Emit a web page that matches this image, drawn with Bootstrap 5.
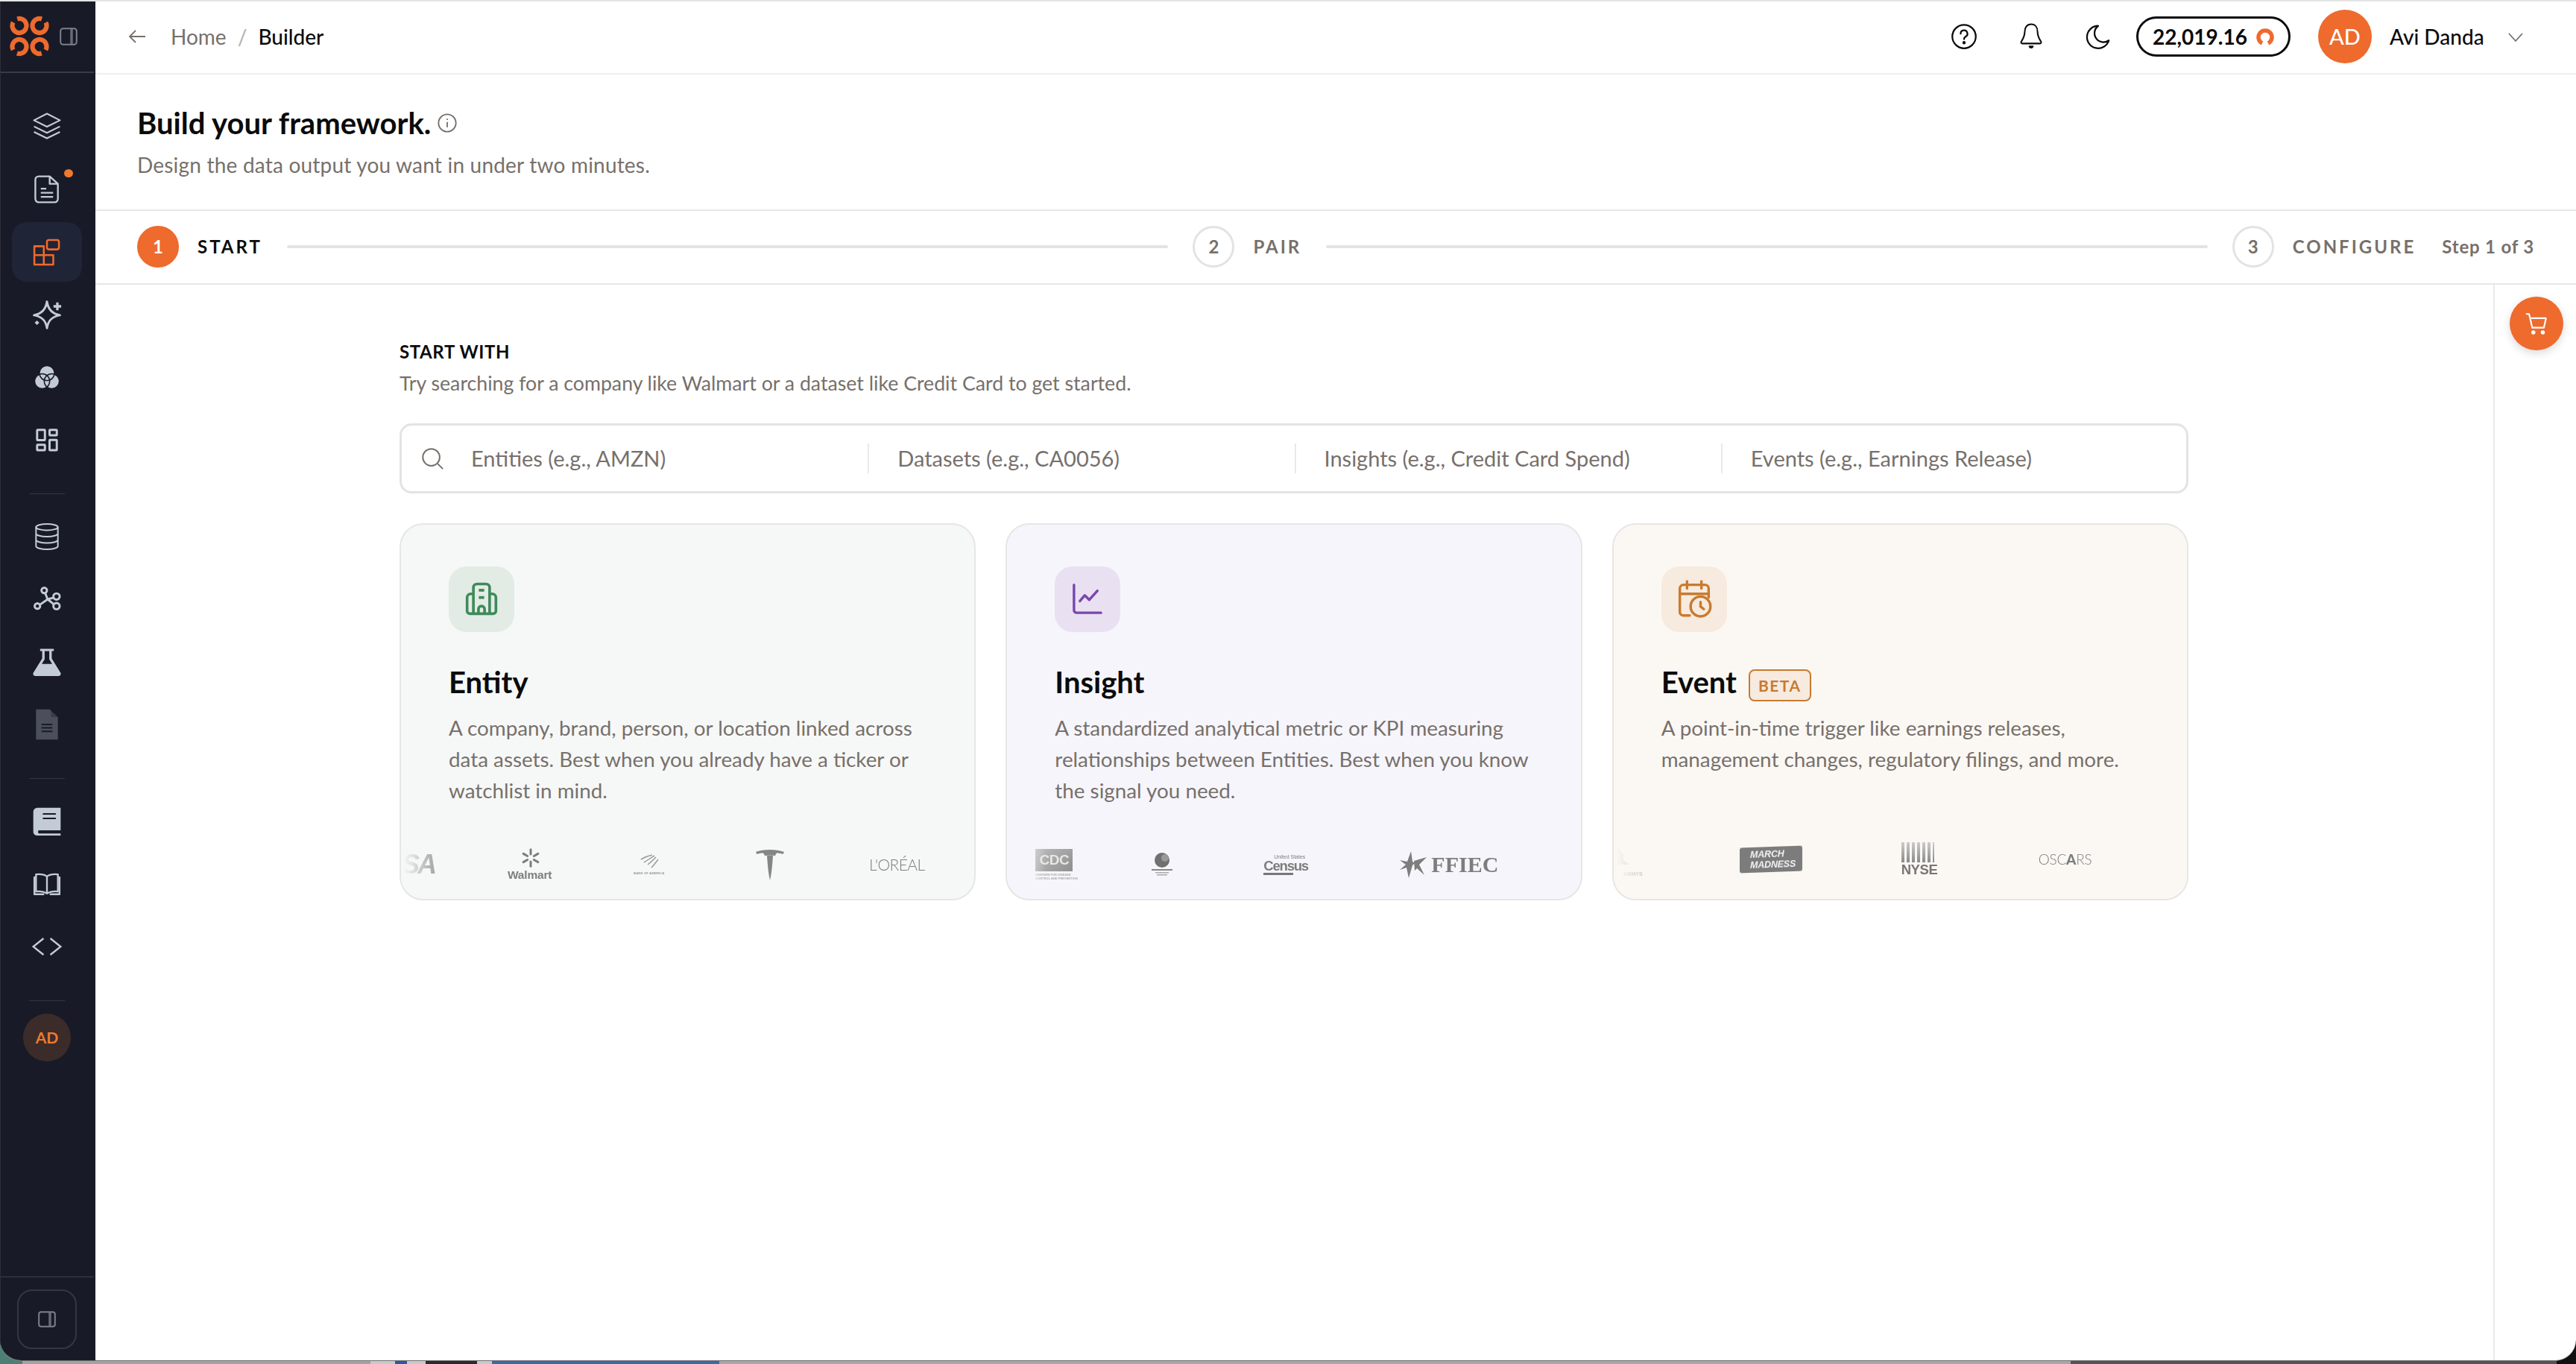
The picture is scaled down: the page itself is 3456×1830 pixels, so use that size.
<!DOCTYPE html>
<html lang="en">
<head>
    <meta charset="UTF-8">
    <meta name="viewport" content="width=device-width, initial-scale=1.0">
    <title>Builder</title>
    <link href="https://cdn.jsdelivr.net/npm/bootstrap@5.3.0/dist/css/bootstrap.min.css" rel="stylesheet">
    <style>
        html, body { height: 100%; }
        body {
            font-family: 'Lato', 'Liberation Sans', sans-serif;
            color: #0b0b0b;
            /* what shows of the desktop under the window */
            background: linear-gradient(to right, #4f7f74 0 30px, #a3a3a3 30px 497px, #c9c9c9 497px 530px, #2a5aa0 530px 546px, #c9c9c9 546px 571px, #2b2b2b 571px 640px, #c9c9c9 640px 660px, #3a6aa8 660px 965px, #a8a8a8 965px 2778px, #555 2778px 3430px, #111 3430px);
            overflow: hidden;
        }
        .app-window {
            height: 1826px;
            background: #fff;
            border-top: 2px solid #e4e4e4;
            border-bottom: 1px solid #6f6f6f;
            border-radius: 0 0 28px 28px;
            overflow: hidden;
        }
        .side-rail {
            width: 128px;
            flex: 0 0 128px;
            background: #181b27;
            padding-right: 2px;
            border-left: 1px solid #2c2f3a;
        }
        .rail-top { height: 96px; flex: none; border-bottom: 2px solid #3a3d48; padding-left: 12px; gap: 13px; }
        .rail-list { padding-top: 32px; gap: 4px; }
        .rail-item { width: 94px; height: 80px; flex: none; border-radius: 20px; color: #c3cbd6; margin-left: 15px; }
        .rail-item svg { width: 44px; height: 44px; display: block; }
        .rail-item.current { background: #1f2536; color: #ee6a2d; }
        .rail-item.dim { color: #4b4f5c; }
        .rail-dot { top: -5px; right: -13px; width: 12px; height: 11px; background: #ee7a2d; }
        .rail-sep { width: 48px; height: 1px; background: #333642; margin: 28px 0 13px 38px; flex: none; }
        .rail-avatar {
            width: 64px; height: 64px; margin-left: 30px;
            background: #3b2c2a; color: #ee7a2d;
            font-size: 21px; font-weight: 700;
        }
        .rail-foot { border-top: 2px solid #2c2f3a; padding: 16px 0 15px 22px; }
        .rail-toggle { width: 80px; height: 80px; border: 2px solid #343742; border-radius: 20px; color: #7b808c; }

        .top-bar { height: 98px; border-bottom: 2px solid #f0efee; padding: 0 69px 2px 44px; flex: none; }
        .crumbs { --bs-breadcrumb-divider: '/'; --bs-breadcrumb-margin-bottom: 0; --bs-breadcrumb-item-padding-x: 15px; --bs-breadcrumb-divider-color: #b9b5b2; font-size: 28px; margin-left: 33px; }
        .crumbs .breadcrumb-item { color: #77706b; }
        .crumbs .breadcrumb-item.active { color: #0b0b0b; font-weight: 500; }
        .top-icon { width: 36px; height: 36px; display: block; margin-right: 54px; }
        .top-icon.last { margin-right: 33px; }
        .credit-pill {
            height: 54px; width: 207px; border: 3px solid #0b0b0b;
            font-size: 28px; font-weight: 700; gap: 12px;
        }
        .user-circle { width: 72px; height: 72px; margin-left: 37px; background: #ee6a2d; color: #fff; font-size: 29px; font-weight: 500; }
        .user-name { font-size: 28px; font-weight: 500; margin-left: 24px; width: 157px; }

        .page-head { height: 183px; border-bottom: 2px solid #e8e6e4; padding: 40px 0 0 56px; flex: none; }
        .page-title { font-size: 40px; font-weight: 700; line-height: 50px; margin: 0; }
        .page-sub { font-size: 28px; letter-spacing: .2px; color: #77706b; line-height: 36px; margin: 13px 0 0; }

        .step-bar { height: 99px; border-bottom: 2px solid #e8e6e4; padding: 0 56px 2px; flex: none; }
        .step-num { width: 56px; height: 56px; flex: none; border: 3px solid #e5e3e1; color: #77706b; font-size: 24px; font-weight: 700; }
        .step-num.on { background: #ee6a2d; border-color: #ee6a2d; color: #fff; }
        .step-label { font-size: 24px; font-weight: 700; letter-spacing: 3px; color: #77706b; margin-left: 25px; }
        .step-label.on { color: #0b0b0b; }
        .step-line { height: 4px; background: #e5e3e1; border-radius: 2px; flex: 1 1 0; margin: 0 33px; }
        .step-count { font-size: 24px; font-weight: 700; color: #77706b; margin-left: 35px; letter-spacing: .8px; }

        .work-area { min-height: 0; }
        .work-main { padding: 74px 409px 0 408px; }
        .rail-right { width: 111px; flex: none; border-left: 2px solid #eceae8; padding: 16px 0 0 20px; }
        .cart-btn { width: 72px; height: 72px; background: #ee6a2d; color: #fff; box-shadow: 0 4px 12px rgba(0,0,0,.15); padding: 0; }
        .start-title { font-size: 24px; font-weight: 700; line-height: 32px; letter-spacing: .6px; margin: 0; }
        .start-sub { font-size: 26.7px; color: #77706b; line-height: 36px; margin: 8px 0 36px; }

        .search-box { height: 94px; border: 3px solid #e5e3e1; border-radius: 16px; padding-right: 52px; }
        .search-glass { width: 55px; flex: none; color: #77706b; padding-left: 24px; }
        .search-glass svg { flex: none; }
        .search-col { flex: 1 1 0; font-size: 29px; color: #77706b; }
        .search-col span { padding-left: 38px; }
        .search-col + .search-col { border-left: 2px solid #ebe9e7; height: 40px; }

        .card-row { gap: 40px; margin-top: 40px; }
        .pick-card {
            flex: 1 1 0; height: 506px; --bs-card-border-color: #e8e6e4; --bs-card-border-width: 2px;
            --bs-card-border-radius: 32px; overflow: hidden;
        }
        .pick-body { padding: 56px 64px 0; }
        .tile { width: 88px; height: 88px; border-radius: 24px; }
        .tile svg { width: 58px; height: 58px; }
        .pick-name { font-size: 40px; font-weight: 700; line-height: 52px; margin: 41px 0 15px; gap: 16px; }
        .pick-text { font-size: 27.8px; line-height: 42px; color: #77706b; margin: 0; white-space: nowrap; }
        .tag-beta {
            font-size: 21px; font-weight: 700; letter-spacing: 1.5px; line-height: 1;
            padding: 9px 11px; border: 2px solid #c97a2e; border-radius: 8px;
            background: #f7eadf; color: #c97a2e; margin-top: 8px;
        }
        .card-green { background: #f6f8f7; }
        .card-green .tile { background: #e2ece5; color: #3f8a5a; }
        .card-purple { background: #f6f5fb; }
        .card-purple .tile { background: #e9e0f1; color: #7a46ae; }
        .card-amber { background: #fbf8f4; }
        .card-amber .tile { background: #f7eadf; color: #c97a2e; }

        .logo-strip {
            height: 84px; margin-top: auto; margin-bottom: 4px; color: #858585;
            -webkit-mask-image: linear-gradient(to right, transparent 4px, #000 52px);
            mask-image: linear-gradient(to right, transparent 4px, #000 52px);
        }
        .logo-strip.lifted { margin-bottom: 11px; }
        .logo-strip > * { flex: none; }
        .logo-visa { font: italic 700 36px 'Liberation Sans', sans-serif; width: 44px; margin-left: 1px; letter-spacing: -3px; color: #999; white-space: nowrap; }
        .logo-walmart { width: 62px; margin-left: 98px; font: 700 15.500px/18px 'Liberation Sans', sans-serif; color: #7d7d7d; letter-spacing: -.2px; white-space: nowrap; }
        .logo-walmart svg { width: 28px; height: 28px; display: block; margin: 0 auto; }
        .logo-boa { width: 44px; margin-left: 107px; font: 700 4.400px/6px 'Liberation Sans', sans-serif; white-space: nowrap; color: #999; }
        .logo-boa svg { width: 28px; height: 22px; display: block; margin: 0 auto 2px; }
        .logo-tesla { width: 42px; height: 42px; margin-left: 118px; }
        .logo-loreal { font-size: 21px; font-weight: 300; margin-left: 112px; letter-spacing: -.6px; color: #7d7d7d; }
        .logo-cdc { width: 50px; margin-left: 38px; font: 700 4px/5px 'Liberation Sans', sans-serif; color: #aaa; white-space: nowrap; }
        .logo-cdc-box { height: 30px; background: linear-gradient(135deg, #bdbdbd, #8f8f8f); color: #e6e6e6; font: 700 19px/30px 'Liberation Sans', sans-serif; text-align: center; margin-bottom: 2px; letter-spacing: -.5px; }
        .logo-fred { width: 32px; height: 34px; margin-left: 104px; }
        .logo-census { width: 56px; margin-left: 120px; font: 700 18.500px/17px 'Liberation Sans', sans-serif; letter-spacing: -1.200px; color: #7d7d7d; white-space: nowrap; }
        .logo-census small { display: block; font-size: 7px; line-height: 6px; letter-spacing: 0; text-align: right; font-weight: 400; }
        .logo-census i { display: block; height: 3px; background: #777; width: 40px; margin-top: 1px; }
        .logo-ffiec { margin-left: 127px; gap: 5px; font: 700 30px 'Liberation Serif', serif; color: #7d7d7d; }
        .logo-ffiec svg { width: 37px; height: 36px; }
        .logo-grammy { width: 38px; margin-left: 1px; font: 700 7px/9px 'Liberation Sans', sans-serif; color: #b5b5b5; text-align: right; }
        .logo-grammy svg { width: 24px; height: 38px; display: block; }
        .logo-madness {
            width: 84px; height: 34px; margin-left: 130px; background: #7c7c7c; color: #f2f2f2;
            font: italic 700 12.500px/14px 'Liberation Sans', sans-serif; letter-spacing: -.2px;
            transform: skewY(-2deg); border-radius: 3px; padding: 3px 0 0 14px; white-space: nowrap;
        }
        .logo-nyse { width: 44px; margin-left: 133px; font: 700 18.500px/18px 'Liberation Sans', sans-serif; color: #777; letter-spacing: -.4px; white-space: nowrap; }
        .logo-nyse-bars { height: 27px; background: repeating-linear-gradient(to right, #8a8a8a 0 4px, transparent 4px 7px); margin-bottom: 1px; -webkit-mask-image: linear-gradient(to bottom, #0006, #000); mask-image: linear-gradient(to bottom, #0006, #000); }
        .logo-oscars { font-size: 19px; font-weight: 300; margin-left: 140px; color: #7d7d7d; letter-spacing: -.2px; }
        .logo-oscars b { font-weight: 900; }
    </style>
</head>
<body>
    <div class="app-window d-flex">
        <aside class="side-rail d-flex flex-column">
            <div class="rail-top d-flex align-items-center">
                <svg width="54" height="56" viewBox="0 0 54 56" fill="none" stroke="#ee6a2d" stroke-width="6.200" stroke-dasharray="52 7.700">
                    <circle cx="13" cy="13.500" r="9.500" transform="rotate(-107 13 13.500)"/>
                    <circle cx="40" cy="13.500" r="9.500" transform="rotate(-27 40 13.500)"/>
                    <circle cx="13" cy="41.500" r="9.500" transform="rotate(153 13 41.500)"/>
                    <circle cx="40" cy="41.500" r="9.500" transform="rotate(73 40 41.500)"/>
                </svg>
                <svg width="24" height="24" viewBox="0 0 24 24" fill="none" stroke="#7b808c" stroke-width="2"><rect x="1.200" y="1.200" width="21.600" height="21.600" rx="3.500"/><path d="M16 1v22" stroke-width="3.500" stroke-opacity=".8"/></svg>
            </div>
            <div class="rail-list d-flex flex-column">
                <a class="rail-item d-flex align-items-center justify-content-center"><svg viewBox="0 0 24 24" fill="none" stroke="currentColor" stroke-width="1.200" stroke-linejoin="round"><path d="M12 2.500 2.500 7.300 12 12l9.500-4.700z"/><path d="m2.500 11.800 9.500 4.700 9.500-4.700"/><path d="m2.500 15.800 9.500 4.700 9.500-4.700"/></svg></a>
                <a class="rail-item d-flex align-items-center justify-content-center"><span class="position-relative d-flex"><svg viewBox="0 0 24 24" fill="none" stroke="currentColor" stroke-width="1.300" stroke-linejoin="round"><path d="M6 2.500h8L20 8v11a2.500 2.500 0 0 1-2.500 2.500H6A2.500 2.500 0 0 1 3.500 19V5A2.500 2.500 0 0 1 6 2.500z"/><path d="M14 2.500V8h6M7.500 11.500h4M7.500 14.500h9M7.500 17.500h9"/></svg><span class="rail-dot position-absolute rounded-circle"></span></span></a>
                <a class="rail-item current d-flex align-items-center justify-content-center"><svg viewBox="-1 -1 26 26" fill="none" stroke="currentColor" stroke-width="1.500" stroke-linejoin="round"><path d="M2 7.500h7.500v7H17V22H2z"/><path d="M2 14.500h7.500V22"/><rect x="12" y="2.500" width="9.500" height="7.500" rx="1.500"/></svg></a>
                <a class="rail-item d-flex align-items-center justify-content-center"><svg viewBox="0 0 24 24" fill="none" stroke="currentColor" stroke-width="1.600" stroke-linejoin="round"><path d="M12 2.500C12.800 8 15.500 11.500 21.500 12.500 15.500 13.500 12.800 16.500 12 22 11.200 16.500 8.500 13.500 2.500 12.500 8.500 11.500 11.200 8 12 2.500z"/><path d="M19.600 3.200v5.600M16.800 6h5.600" stroke-width="1.800"/><path d="m4.700 16.300 1.700 1.700-1.700 1.700L3 18z" fill="currentColor" stroke="none"/></svg></a>
                <a class="rail-item d-flex align-items-center justify-content-center"><svg viewBox="0 0 24 24"><g fill="currentColor"><circle cx="12" cy="9" r="5.500"/><circle cx="8.500" cy="15" r="5.500"/><circle cx="15.500" cy="15" r="5.500"/></g><g fill="none" stroke="#181b27" stroke-width=".8"><circle cx="12" cy="9" r="5.500"/><circle cx="8.500" cy="15" r="5.500"/><circle cx="15.500" cy="15" r="5.500"/></g></svg></a>
                <a class="rail-item d-flex align-items-center justify-content-center"><svg viewBox="0 0 24 24" fill="none" stroke="currentColor" stroke-width="1.600"><rect x="4.800" y="4.800" width="5.700" height="7.500" rx=".4"/><rect x="13.900" y="4.800" width="5.300" height="3.900" rx=".4"/><rect x="4.800" y="15.700" width="5.700" height="3.900" rx=".4"/><rect x="13.900" y="12.100" width="5.300" height="7.500" rx=".4"/></svg></a>

                <div class="rail-sep"></div>

                <a class="rail-item d-flex align-items-center justify-content-center"><svg viewBox="0 0 24 24" fill="none" stroke="currentColor" stroke-width="1.100"><ellipse cx="12" cy="5" rx="8" ry="2.300"/><path d="M4 5v14c0 1.300 3.600 2.300 8 2.300s8-1 8-2.300V5M4 9.700c0 1.300 3.600 2.300 8 2.300s8-1 8-2.300M4 14.300c0 1.300 3.600 2.300 8 2.300s8-1 8-2.300"/></svg></a>
                <a class="rail-item d-flex align-items-center justify-content-center"><svg viewBox="0 0 24 24" fill="none" stroke="currentColor" stroke-width="1.600"><circle cx="10" cy="5.500" r="2"/><circle cx="19" cy="10" r="2.300"/><circle cx="5" cy="17" r="2"/><circle cx="19" cy="17" r="2.300"/><path d="m10.700 7.500 1.800 4.500 4.500-1.200M12.500 12 6.800 16M12.500 12l4.600 3.800"/></svg></a>
                <a class="rail-item d-flex align-items-center justify-content-center"><svg viewBox="0 0 24 24" fill="currentColor"><path d="M7 2.500h10v1.600h-1.500v5.500L22 20a1.600 1.600 0 0 1-1.400 2.300H3.400A1.600 1.600 0 0 1 2 20L8.500 9.600V4.100H7zm3.300 1.600v6L8.200 13.500h7.600l-2.100-3.400v-6z"/></svg></a>
                <a class="rail-item dim d-flex align-items-center justify-content-center"><svg viewBox="0 0 24 24" fill="currentColor"><path d="M4 1H14l6 5.500V23H4z"/><path d="M15 1.500 20.500 6.500H15z" fill="#181b27" fill-opacity=".35"/><path d="M8 12h8M8 14.500h8M8 17h8" stroke="#181b27" stroke-width="1.100"/></svg></a>

                <div class="rail-sep"></div>

                <a class="rail-item d-flex align-items-center justify-content-center"><svg viewBox="0 0 24 24" fill="currentColor"><path d="M5 2h17v16.500H6a1.500 1.500 0 0 0 0 2.300h16v1.500H4.500A2.500 2.500 0 0 1 2 19.800V5a3 3 0 0 1 3-3z"/><path d="M9 6.500h9.500M9 9.800h9.500" stroke="#181b27" stroke-width="1.100"/></svg></a>
                <a class="rail-item d-flex align-items-center justify-content-center"><svg viewBox="0 0 24 24" fill="none" stroke="currentColor" stroke-width="1.300" stroke-linejoin="round"><path d="M12 6.500C10 5 6.500 4.700 4 5v12.500c3-.3 6 .2 8 1.500 2-1.300 5-1.800 8-1.500V5c-2.500-.3-6 0-8 1.500zM12 6.500V19"/><path d="M2.800 6.500V19.500H10M21.200 6.500V19.500H14"/></svg></a>
                <a class="rail-item d-flex align-items-center justify-content-center"><svg viewBox="0 0 24 24" fill="none" stroke="currentColor" stroke-width="1.300"><path d="M9.500 6 2 12l7.500 6M14.500 6 22 12l-7.500 6"/></svg></a>

                <div class="rail-sep"></div>
                <div class="rail-avatar rounded-circle d-flex align-items-center justify-content-center">AD</div>
            </div>
            <div class="rail-foot mt-auto">
                <button class="rail-toggle btn d-flex align-items-center justify-content-center p-0"><svg width="24" height="22" viewBox="0 0 24 22" fill="none" stroke="currentColor" stroke-width="2"><rect x="1.200" y="1.200" width="21.600" height="19.600" rx="3"/><path d="M16 1v20" stroke-width="3.500" stroke-opacity=".8"/></svg></button>
            </div>
        </aside>

        <div class="flex-grow-1 d-flex flex-column" style="min-width:0">
            <header class="top-bar d-flex align-items-center">
                <svg width="24" height="24" viewBox="0 0 24 24" fill="none" stroke="#77706b" stroke-width="1.800"><path d="M23 12H2M10 4l-8 8 8 8"/></svg>
                <nav aria-label="breadcrumb">
                    <ol class="breadcrumb crumbs">
                        <li class="breadcrumb-item">Home</li>
                        <li class="breadcrumb-item active" aria-current="page">Builder</li>
                    </ol>
                </nav>
                <div class="ms-auto d-flex align-items-center">
                    <svg class="top-icon" viewBox="0 0 24 24" fill="none" stroke="#0b0b0b" stroke-width="1.500"><circle cx="12" cy="12" r="10.500"/><path d="M9 9.500a3 3 0 1 1 4.300 2.600c-.9.500-1.300 1.100-1.300 2v.3" stroke-linecap="round"/><circle cx="12" cy="17.500" r=".7" fill="#0b0b0b"/></svg>
                    <svg class="top-icon" viewBox="2 1 20 23" fill="none" stroke="#0b0b0b" stroke-width="1.300" stroke-linejoin="round"><path d="M12 2c-3.800 0-5.500 3-5.500 6.500 0 4-1.500 6-3 8.500a1 1 0 0 0 1 1.500h15a1 1 0 0 0 1-1.500c-1.500-2.500-3-4.500-3-8.500C17.500 5 15.800 2 12 2z"/><path d="M10.500 21a1.600 1.600 0 0 0 3 0z" fill="#0b0b0b"/></svg>
                    <svg class="top-icon last" viewBox="0 0 24 24" fill="none" stroke="#0b0b0b" stroke-width="1.500" stroke-linejoin="round"><path d="M12 2.500a10 10 0 1 0 9.500 13 8 8 0 0 1-9.500-13z"/></svg>
                    <div class="credit-pill rounded-pill d-flex align-items-center justify-content-center">22,019.16
                        <svg width="24" height="24" viewBox="0 0 24 24" fill="none" stroke="#ee6a2d" stroke-width="5.500"><path d="M8 21a9 9 0 1 1 8 0"/></svg>
                    </div>
                    <div class="user-circle rounded-circle d-flex align-items-center justify-content-center">AD</div>
                    <div class="user-name">Avi Danda</div>
                    <svg width="24" height="24" viewBox="0 0 24 24" fill="none" stroke="#77706b" stroke-width="1.800"><path d="m3 8 9 10 9-10"/></svg>
                </div>
            </header>

            <section class="page-head">
                <h1 class="page-title d-flex align-items-center">Build your framework.
                    <svg class="ms-2" width="28" height="28" viewBox="0 0 24 24" fill="none" stroke="#77706b" stroke-width="1.600"><circle cx="12" cy="12" r="10"/><path d="M12 11v6M12 7v1.500"/></svg>
                </h1>
                <p class="page-sub">Design the data output you want in under two minutes.</p>
            </section>

            <section class="step-bar d-flex align-items-center">
                <div class="step-num on rounded-circle d-flex align-items-center justify-content-center">1</div>
                <div class="step-label on">START</div>
                <div class="step-line"></div>
                <div class="step-num rounded-circle d-flex align-items-center justify-content-center">2</div>
                <div class="step-label">PAIR</div>
                <div class="step-line"></div>
                <div class="step-num rounded-circle d-flex align-items-center justify-content-center">3</div>
                <div class="step-label">CONFIGURE</div>
                <div class="step-count">Step 1 of 3</div>
            </section>

            <div class="work-area d-flex flex-grow-1">
                <main class="work-main flex-grow-1">
                    <h2 class="start-title">START WITH</h2>
                    <p class="start-sub">Try searching for a company like Walmart or a dataset like Credit Card to get started.</p>

                    <div class="search-box d-flex align-items-center">
                        <div class="search-glass d-flex"><svg width="34" height="34" viewBox="0 0 24 24" fill="none" stroke="currentColor" stroke-width="1.400"><circle cx="11" cy="11" r="8"/><path d="m17 17 5 5"/></svg></div>
                        <div class="search-col d-flex align-items-center"><span>Entities (e.g., AMZN)</span></div>
                        <div class="search-col d-flex align-items-center"><span>Datasets (e.g., CA0056)</span></div>
                        <div class="search-col d-flex align-items-center"><span>Insights (e.g., Credit Card Spend)</span></div>
                        <div class="search-col d-flex align-items-center"><span>Events (e.g., Earnings Release)</span></div>
                    </div>

                    <div class="card-row d-flex">
                        <div class="card pick-card card-green">
                            <div class="pick-body">
                                <div class="tile d-flex align-items-center justify-content-center"><svg viewBox="0 0 24 24" fill="none" stroke="currentColor" stroke-width="1.500" stroke-linejoin="round"><path d="M7.500 20V5.500a2 2 0 0 1 2-2h5a2 2 0 0 1 2 2V20"/><path d="M7.500 9H6a2 2 0 0 0-2 2v7.500A1.500 1.500 0 0 0 5.500 20h13a1.500 1.500 0 0 0 1.500-1.500V11a2 2 0 0 0-2-2h-1.500"/><path d="M10.500 7h3M10.500 11h3"/><path d="M10.300 20v-2.500a1.700 1.700 0 0 1 3.400 0V20"/></svg></div>
                                <h3 class="pick-name d-flex align-items-center">Entity</h3>
                                <p class="pick-text">A company, brand, person, or location linked across<br>data assets. Best when you already have a ticker or<br>watchlist in mind.</p>
                            </div>
                            <div class="logo-strip d-flex align-items-center">
                                <div class="logo-visa">SA</div>
                                <div class="logo-walmart"><svg viewBox="0 0 24 24" fill="currentColor"><rect x="10.700" y="1" width="2.600" height="8" rx="1.300"/><rect x="10.700" y="15" width="2.600" height="8" rx="1.300"/><rect x="10.700" y="1" width="2.600" height="8" rx="1.300" transform="rotate(60 12 12)"/><rect x="10.700" y="1" width="2.600" height="8" rx="1.300" transform="rotate(120 12 12)"/><rect x="10.700" y="1" width="2.600" height="8" rx="1.300" transform="rotate(240 12 12)"/><rect x="10.700" y="1" width="2.600" height="8" rx="1.300" transform="rotate(300 12 12)"/></svg>Walmart</div>
                                <div class="logo-boa"><svg viewBox="0 0 28 22" fill="none" stroke="currentColor" stroke-width="1.500"><path d="M2 8c5-3 10-5 15-6M6 12c5-3 9-6 14-9M11 15c4-3 7-6 11-10M16 19c3-3 6-7 9-11"/></svg>BANK OF AMERICA</div>
                                <svg class="logo-tesla" viewBox="0 0 42 42" fill="currentColor"><path d="M2 4c11-4 27-4 38 0l-1.500 3c-3-1-6-1.500-8-1.500-1 .2-2 1.500-2.500 4-1-.8-3-.8-7-.8s-6 0-7 .8c-.5-2.500-1.500-3.800-2.500-4-2 0-5 .5-8 1.500z"/><path d="M17 9h8c-.8 12-1.800 24-4 33-2.200-9-3.200-21-4-33z"/></svg>
                                <div class="logo-loreal">L'ORÉAL</div>
                            </div>
                        </div>

                        <div class="card pick-card card-purple">
                            <div class="pick-body">
                                <div class="tile d-flex align-items-center justify-content-center"><svg viewBox="0 0 24 24" fill="none" stroke="currentColor" stroke-width="1.400" stroke-linecap="round" stroke-linejoin="round"><path d="M4.500 4v14a1.500 1.500 0 0 0 1.500 1.500h13.500"/><path d="m7.800 13 2.700-3.200 2.500 2.500 4.500-5"/></svg></div>
                                <h3 class="pick-name d-flex align-items-center">Insight</h3>
                                <p class="pick-text">A standardized analytical metric or KPI measuring<br>relationships between Entities. Best when you know<br>the signal you need.</p>
                            </div>
                            <div class="logo-strip d-flex align-items-center">
                                <div class="logo-cdc"><div class="logo-cdc-box">CDC</div>CENTERS FOR DISEASE<br>CONTROL AND PREVENTION</div>
                                <svg class="logo-fred" viewBox="0 0 32 34"><circle cx="16" cy="11" r="10" fill="#707070"/><circle cx="20" cy="8" r="5" fill="#999"/><rect x="2" y="23" width="28" height="2" fill="#888"/><rect x="7" y="27" width="18" height="1.500" fill="#aaa"/><rect x="9" y="30" width="14" height="1.500" fill="#aaa"/></svg>
                                <div class="logo-census"><small>United States</small>Census<i></i></div>
                                <div class="logo-ffiec d-flex align-items-center"><svg viewBox="0 0 37 36" fill="currentColor"><path d="m15 0 2 14 3 2-3 3-5 17-3-14-9 3 8-7-8-6 10 2zM19 13l17-5-10 10 7 14-10-9-3 3z"/></svg>FFIEC</div>
                            </div>
                        </div>

                        <div class="card pick-card card-amber">
                            <div class="pick-body">
                                <div class="tile d-flex align-items-center justify-content-center"><svg viewBox="0 0 24 24" fill="none" stroke="currentColor" stroke-width="1.400" stroke-linecap="round" stroke-linejoin="round"><path d="M9.500 21H6a2 2 0 0 1-2-2V6a2 2 0 0 1 2-2h12a2 2 0 0 1 2 2v5"/><path d="M8 2v4M16 2v4M4 9h16"/><circle cx="15.500" cy="16" r="5.500"/><path d="M15.500 13.500V16l1.800 1.500"/></svg></div>
                                <h3 class="pick-name d-flex align-items-center">Event <span class="badge tag-beta">BETA</span></h3>
                                <p class="pick-text">A point-in-time trigger like earnings releases,<br>management changes, regulatory filings, and more.</p>
                            </div>
                            <div class="logo-strip lifted d-flex align-items-center">
                                <div class="logo-grammy"><svg viewBox="0 0 24 38" fill="#c8c8c8"><path d="M2 0c3 6 6 14 10 16v8l8 6H0z"/></svg>AMMYS</div>
                                <div class="logo-madness">MARCH<br>MADNESS</div>
                                <div class="logo-nyse"><div class="logo-nyse-bars"></div>NYSE</div>
                                <div class="logo-oscars">OSC<b>A</b>RS</div>
                            </div>
                        </div>
                    </div>
                </main>
                <aside class="rail-right">
                    <button class="cart-btn btn rounded-circle d-flex align-items-center justify-content-center" aria-label="Cart"><svg width="34" height="34" viewBox="0 0 24 24" fill="none" stroke="currentColor" stroke-width="1.500" stroke-linejoin="round"><path d="M2 3h3l3 13h11l2-9H6"/><circle cx="9" cy="20.500" r="1.200" fill="currentColor"/><circle cx="18" cy="20.500" r="1.200" fill="currentColor"/></svg></button>
                </aside>
            </div>
        </div>
    </div>
    <script src="https://cdn.jsdelivr.net/npm/bootstrap@5.3.0/dist/js/bootstrap.bundle.min.js"></script>
</body>
</html>
